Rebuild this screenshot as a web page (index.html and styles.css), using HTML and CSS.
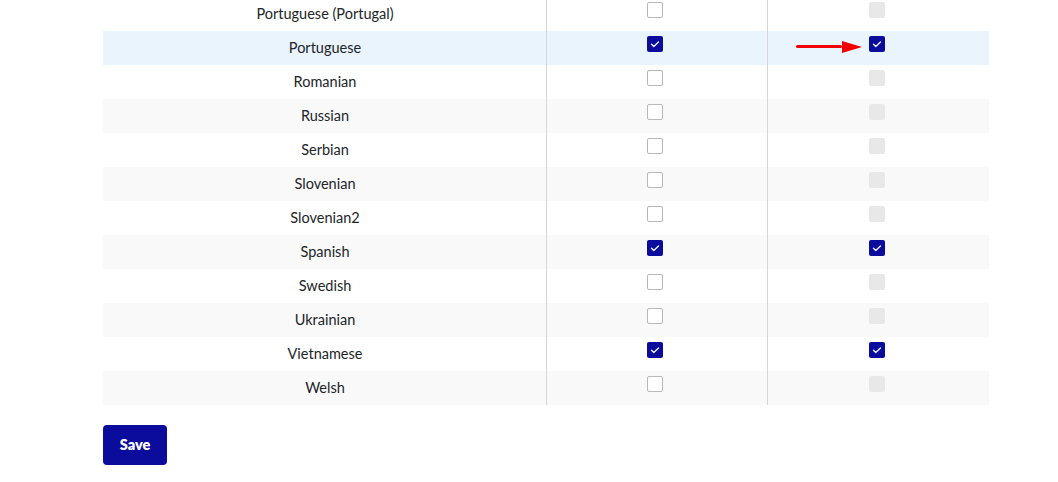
FILE: index.html
```html
<!DOCTYPE html>
<html>
<head>
<meta charset="utf-8">
<link rel="stylesheet" href="styles.css">
</head>
<body>
<div class="page">
  <div class="table">
    <div class="row"><div class="name">Portuguese (Portugal)</div><div class="cell"><span class="cb"></span></div><div class="cell"><span class="cb dis"></span></div></div>
    <div class="row hover"><div class="name">Portuguese</div><div class="cell"><span class="cb on"><svg viewBox="0 0 16 16"><path d="M4.5 8.3l2.3 2.2 4.7-4.6"/></svg></span></div><div class="cell arrowcell"><span class="arrow"><span class="shaft"></span><span class="head"></span></span><span class="cb on"><svg viewBox="0 0 16 16"><path d="M4.5 8.3l2.3 2.2 4.7-4.6"/></svg></span></div></div>
    <div class="row"><div class="name">Romanian</div><div class="cell"><span class="cb"></span></div><div class="cell"><span class="cb dis"></span></div></div>
    <div class="row alt"><div class="name">Russian</div><div class="cell"><span class="cb"></span></div><div class="cell"><span class="cb dis"></span></div></div>
    <div class="row"><div class="name">Serbian</div><div class="cell"><span class="cb"></span></div><div class="cell"><span class="cb dis"></span></div></div>
    <div class="row alt"><div class="name">Slovenian</div><div class="cell"><span class="cb"></span></div><div class="cell"><span class="cb dis"></span></div></div>
    <div class="row"><div class="name">Slovenian2</div><div class="cell"><span class="cb"></span></div><div class="cell"><span class="cb dis"></span></div></div>
    <div class="row alt"><div class="name">Spanish</div><div class="cell"><span class="cb on"><svg viewBox="0 0 16 16"><path d="M4.5 8.3l2.3 2.2 4.7-4.6"/></svg></span></div><div class="cell"><span class="cb on"><svg viewBox="0 0 16 16"><path d="M4.5 8.3l2.3 2.2 4.7-4.6"/></svg></span></div></div>
    <div class="row"><div class="name">Swedish</div><div class="cell"><span class="cb"></span></div><div class="cell"><span class="cb dis"></span></div></div>
    <div class="row alt"><div class="name">Ukrainian</div><div class="cell"><span class="cb"></span></div><div class="cell"><span class="cb dis"></span></div></div>
    <div class="row"><div class="name">Vietnamese</div><div class="cell"><span class="cb on"><svg viewBox="0 0 16 16"><path d="M4.5 8.3l2.3 2.2 4.7-4.6"/></svg></span></div><div class="cell"><span class="cb on"><svg viewBox="0 0 16 16"><path d="M4.5 8.3l2.3 2.2 4.7-4.6"/></svg></span></div></div>
    <div class="row alt"><div class="name">Welsh</div><div class="cell"><span class="cb"></span></div><div class="cell"><span class="cb dis"></span></div></div>
  </div>
  <button class="save">Save</button>
</div>
</body>
</html>
```
FILE: styles.css
```css
html, body {
  margin: 0;
  padding: 0;
  background: #ffffff;
}
body {
  font-family: Lato, "Noto Sans", sans-serif;
  color: #212529;
  font-size: 14.5px;
}
.page {
  padding-left: 103px;
  margin-top: -3px;
}
.table {
  width: 886px;
}
.row {
  display: grid;
  grid-template-columns: 443px 221px 222px;
  height: 34px;
}
.row.alt {
  background: #f9f9f9;
}
.row.hover {
  background: #e9f4fd;
}
.name {
  display: flex;
  align-items: center;
  justify-content: center;
  padding-bottom: 2px;
  padding-left: 1px;
}
.cell {
  border-left: 1px solid #d6d6d6;
  display: flex;
  align-items: flex-start;
  justify-content: center;
  padding-top: 5px;
  padding-right: 4px;
}
.cb {
  width: 16px;
  height: 16px;
  box-sizing: border-box;
  border: 1px solid #b8b8b8;
  border-radius: 2px;
  background: #fff;
  display: block;
}
.cb.dis {
  border-color: #e8e8e8;
  background: #e8e8e8;
}
.cb.on {
  border: none;
  background: #0b0b9c;
}
.cb svg {
  display: block;
  width: 16px;
  height: 16px;
}
.cb svg path {
  fill: none;
  stroke: #e8f0ff;
  stroke-width: 1.4;
  stroke-linecap: round;
  stroke-linejoin: round;
}
.arrowcell {
  position: relative;
}
.arrow {
  position: absolute;
  left: 28px;
  top: 9px;
  width: 66px;
  height: 13px;
  display: flex;
  align-items: center;
}
.shaft {
  display: block;
  width: 46px;
  height: 3px;
  background: #f00000;
  border-radius: 2px;
}
.head {
  display: block;
  width: 0;
  height: 0;
  border-top: 6.5px solid transparent;
  border-bottom: 6.5px solid transparent;
  border-left: 20px solid #f00000;
}
.save {
  margin-top: 20px;
  width: 64px;
  height: 40px;
  border: none;
  border-radius: 4px;
  background: #0b0b9c;
  color: #fff;
  font-family: Lato, "Noto Sans", sans-serif;
  font-weight: 800;
  font-size: 14.5px;
  padding: 0 0 2px 0;
  display: block;
}
```
